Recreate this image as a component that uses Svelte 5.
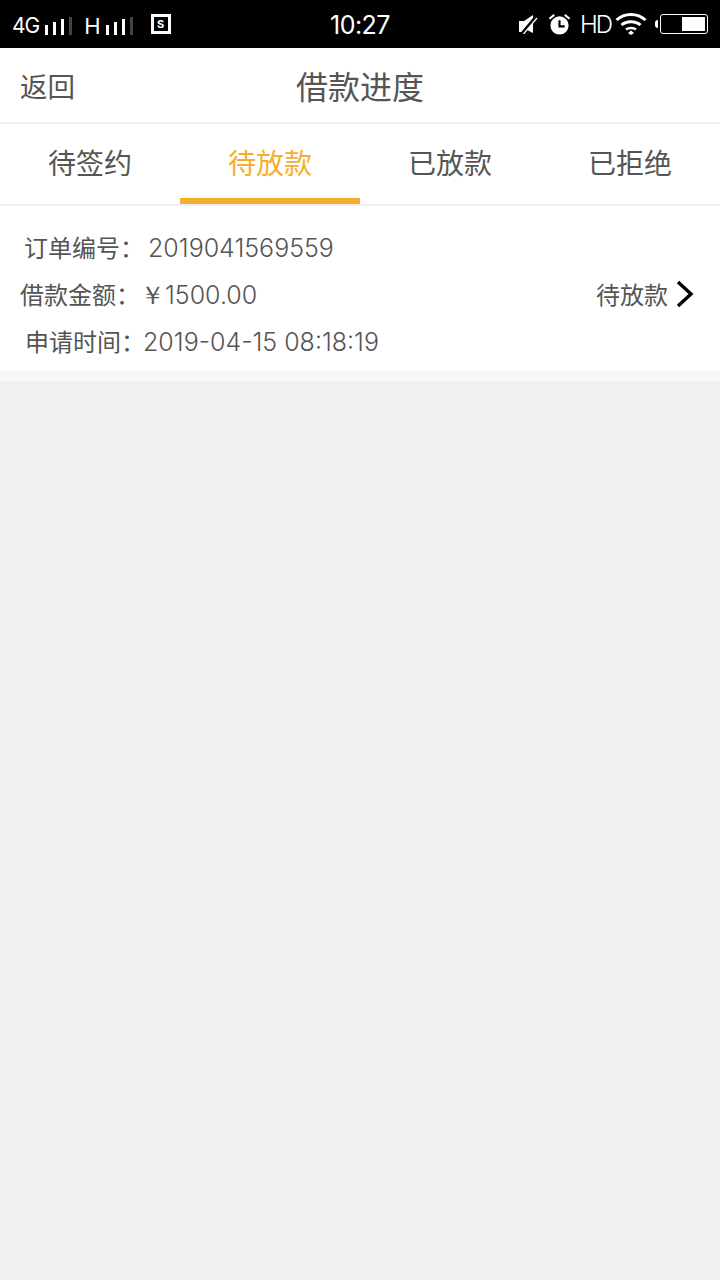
<script>
  const tabs = ['待签约', '待放款', '已放款', '已拒绝'];
  let active = $state(1);

  const order = {
    number: '2019041569559',
    amount: '￥1500.00',
    time: '2019-04-15 08:18:19',
    status: '待放款',
  };
</script>

<div class="page">
  <div class="statusbar">
    <div class="status-left">
      <span class="net">4G</span>
      <svg class="bars" viewBox="0 0 28 18" width="28" height="18">
        <rect x="0" y="8" width="3" height="10" fill="#fff"/>
        <rect x="8" y="5" width="3" height="13" fill="#fff"/>
        <rect x="16" y="2" width="3" height="16" fill="#fff"/>
        <rect x="24" y="0" width="3" height="18" fill="#444"/>
      </svg>
      <span class="net net-h">H</span>
      <svg class="bars" viewBox="0 0 28 18" width="28" height="18">
        <rect x="0" y="8" width="3" height="10" fill="#fff"/>
        <rect x="8" y="5" width="3" height="13" fill="#fff"/>
        <rect x="16" y="2" width="3" height="16" fill="#fff"/>
        <rect x="24" y="0" width="3" height="18" fill="#444"/>
      </svg>
      <span class="s-icon"><span>S</span></span>
    </div>
    <div class="clock">10:27</div>
    <div class="status-right">
      <svg viewBox="0 0 20 20" width="20" height="20">
        <path d="M1 7h5l9-6v5L4 18H1z" fill="#fff"/>
        <path d="M15 9v10l-6-3z" fill="#fff"/>
        <path d="M3 20L18 2" stroke="#000" stroke-width="2"/>
        <path d="M5.500 20L19 4" stroke="#fff" stroke-width="1.300"/>
      </svg>
      <svg class="alarm" viewBox="0 0 24 24" width="23" height="23">
        <circle cx="12" cy="13" r="9.500" fill="#fff"/>
        <path d="M12 7.500v6.500h5.500" fill="none" stroke="#000" stroke-width="2.200"/>
        <path d="M1.500 6l5-4M22.500 6l-5-4" stroke="#fff" stroke-width="2.200"/>
      </svg>
      <span class="hd">HD</span>
      <svg class="wifi" viewBox="0 0 32 24" width="32" height="24">
        <path d="M1.500 9C9.500 1.500 22.500 1.500 30.500 9" fill="none" stroke="#fff" stroke-width="3"/>
        <path d="M6.500 14C11.500 9.500 20.500 9.500 25.500 14" fill="none" stroke="#fff" stroke-width="3"/>
        <path d="M11 18.500C13.500 16.500 18.500 16.500 21 18.500" fill="none" stroke="#fff" stroke-width="2.600"/>
        <path d="M13 22l3-2.500 3 2.500-3 2z" fill="#fff"/>
      </svg>
      <div class="battery">
        <span class="nub"></span>
        <span class="cell"><span class="level"></span></span>
      </div>
    </div>
  </div>

  <header class="topbar">
    <span class="back">返回</span>
    <h1>借款进度</h1>
  </header>

  <nav class="tabs">
    {#each tabs as tab, i}
      <button class="tab" class:active={i === active} onclick={() => (active = i)}>{tab}</button>
    {/each}
  </nav>

  <section class="order">
    <div class="info">
      <div class="line first"><span>订单编号：</span><span class="val">{order.number}</span></div>
      <div class="line second"><span>借款金额：</span><span class="val">{order.amount}</span></div>
      <div class="line third"><span>申请时间：</span><span class="val">{order.time}</span></div>
    </div>
    <div class="state">
      <span>{order.status}</span>
      <svg viewBox="0 0 18 28" width="18" height="28">
        <path d="M2 2l13 12L2 26" fill="none" stroke="#000" stroke-width="3.400"/>
      </svg>
    </div>
  </section>
  <div class="strip"></div>
</div>

<style>
  :global(body) {
    background: #f0f0f0;
    font-family: "Noto Sans CJK SC", "Noto Sans", sans-serif;
  }

  .page {
    min-height: 1280px;
    display: flex;
    flex-direction: column;
    color: #555;
  }

  .statusbar {
    height: 48px;
    background: #000;
    color: #fff;
    display: grid;
    grid-template-columns: 1fr auto 1fr;
    align-items: center;
    font-family: Inter, "Liberation Sans", sans-serif;
  }

  .status-left {
    display: flex;
    align-items: center;
    padding-left: 12px;
    padding-top: 3px;
  }

  .net {
    font-size: 21px;
    font-weight: 400;
    letter-spacing: -1px;
    margin-right: 6px;
  }

  .net-h {
    margin-left: 11px;
    font-size: 22px;
  }

  .s-icon {
    margin-left: 17px;
    margin-top: -3px;
    width: 20px;
    height: 20px;
    box-sizing: border-box;
    border: 3px solid #fff;
    display: flex;
    align-items: center;
    justify-content: center;
    font-size: 11px;
    font-weight: 700;
  }

  .clock {
    font-size: 25px;
    font-weight: 400;
    letter-spacing: -0.5px;
    padding-top: 2px;
  }

  .status-right {
    display: flex;
    align-items: center;
    justify-content: flex-end;
    padding-right: 12px;
  }

  .alarm {
    margin-left: 10px;
  }

  .hd {
    margin-left: 9px;
    font-size: 24px;
    font-weight: 300;
    letter-spacing: -2px;
    margin-right: 2px;
  }

  .wifi {
    margin-left: 2px;
    margin-top: -3px;
  }

  .battery {
    display: flex;
    align-items: center;
    margin-left: 8px;
  }

  .nub {
    width: 3px;
    height: 8px;
    background: #fff;
    border-radius: 3px 0 0 3px;
    margin-right: 2px;
  }

  .cell {
    width: 48px;
    height: 20px;
    box-sizing: border-box;
    border: 1px solid #fff;
    border-radius: 3px;
    padding: 2px;
    display: flex;
    justify-content: flex-end;
  }

  .level {
    width: 23px;
    background: #fff;
  }

  .topbar {
    height: 74px;
    background: #fff;
    display: grid;
    grid-template-columns: 1fr auto 1fr;
    align-items: center;
    padding: 0 20px;
    border-bottom: 2px solid #efefef;
  }

  .back {
    font-size: 27.500px;
  }

  h1 {
    margin: 0;
    font-size: 32px;
    font-weight: 400;
  }

  .tabs {
    height: 80px;
    display: grid;
    grid-template-columns: repeat(4, 1fr);
    background: #fff;
    border-bottom: 2px solid #efefef;
  }

  .tab {
    border: none;
    border-bottom: 6px solid transparent;
    background: none;
    padding: 2px 0 0;
    font: inherit;
    font-size: 28px;
    color: #555;
  }

  .tab.active {
    color: #f5ae2e;
    border-bottom-color: #f5ae2e;
  }

  .order {
    height: 165px;
    box-sizing: border-box;
    padding: 17px 26px 7px 0;
    background: #fff;
    display: flex;
    justify-content: space-between;
    align-items: center;
  }

  .line {
    height: 47px;
    display: flex;
    align-items: baseline;
    line-height: 47px;
    font-size: 24px;
    white-space: nowrap;
  }

  .first { padding-left: 24px; }
  .second { padding-left: 20px; }
  .third { padding-left: 25px; }

  .val {
    font-family: Inter, "Liberation Sans", sans-serif;
    font-size: 25px;
    font-weight: 300;
  }

  .first .val { margin-left: 4px; }
  .second .val { margin-left: 0; }
  .third .val { margin-left: -2px; }

  .state {
    display: flex;
    align-items: center;
    gap: 8px;
    font-size: 24px;
  }

  .strip {
    height: 10px;
    background: #f7f7f7;
  }
</style>
